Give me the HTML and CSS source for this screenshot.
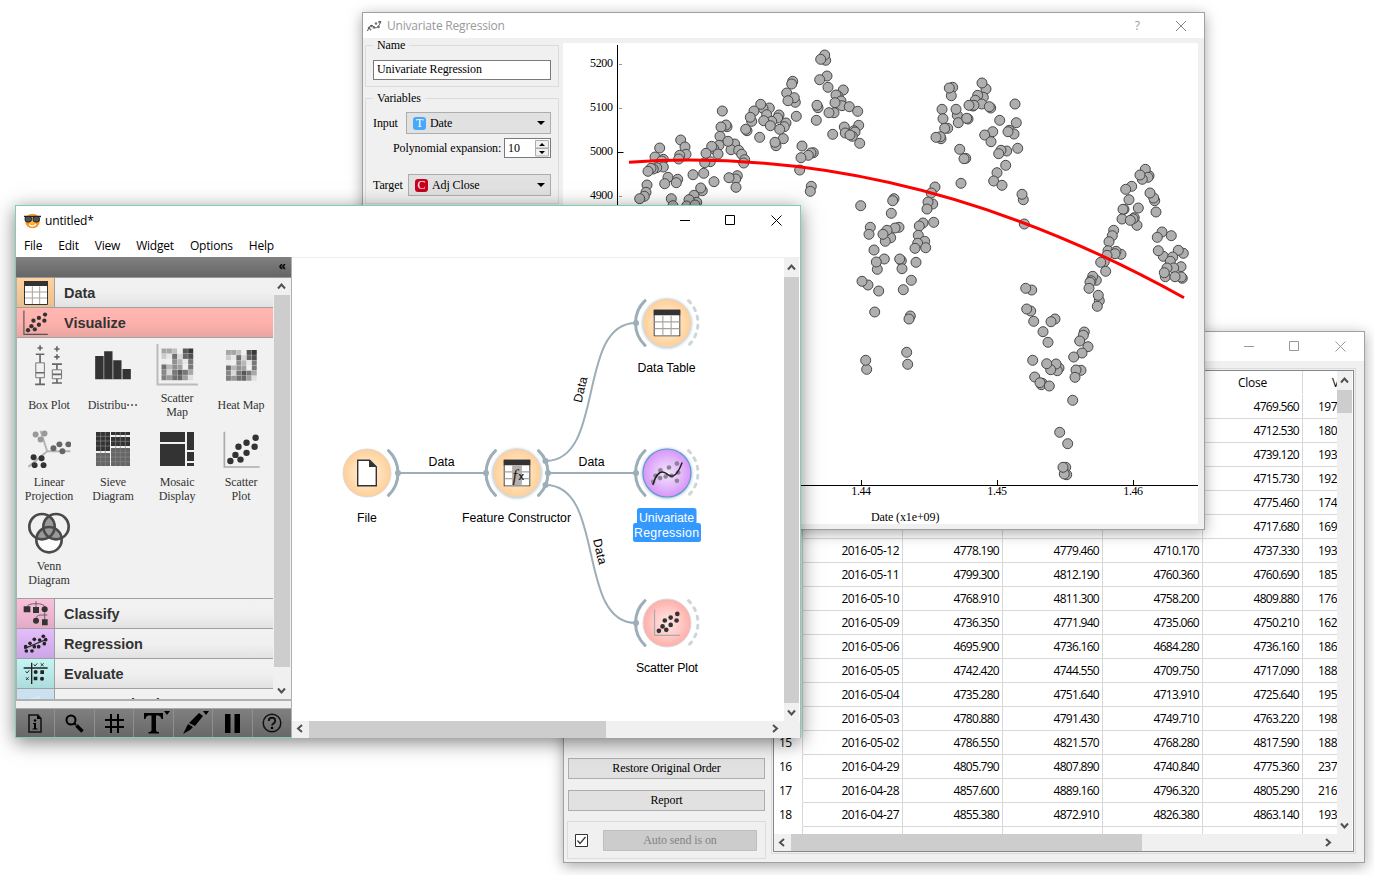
FILE: index.html
```html
<!DOCTYPE html>
<html lang="en">
<head>
<meta charset="utf-8">
<title>untitled*</title>
<link rel="stylesheet" href="styles.css">
</head>
<body>
<svg class="defs" width="0" height="0">
  <defs>
    <radialGradient id="gOrange"><stop offset="0" stop-color="#fff0dc"/><stop offset=".5" stop-color="#ffe2be"/><stop offset="1" stop-color="#ffcf97"/></radialGradient>
    <radialGradient id="gPurple"><stop offset="0" stop-color="#f3e2fd"/><stop offset=".5" stop-color="#e6c0fb"/><stop offset="1" stop-color="#d796f8"/></radialGradient>
    <radialGradient id="gPink"><stop offset="0" stop-color="#ffe6e4"/><stop offset=".5" stop-color="#ffcecb"/><stop offset="1" stop-color="#ffaea8"/></radialGradient>
    <filter id="soft" x="-30%" y="-30%" width="160%" height="160%"><feGaussianBlur stdDeviation="1.6"/></filter>
  </defs>
  <symbol id="i-table" viewBox="0 0 72 72"><path d="M1.5 1.5h69v69h-69z" fill="#fff" stroke="#333" stroke-width="3"/><path d="M0 0h72v15H0z" fill="#333"/><path d="M3 33h66M3 51h66M25 16v53M47 16v53" stroke="#aaa39c" stroke-width="3" fill="none"/></symbol>
  <symbol id="i-scatter" viewBox="638 106 110 110"><path d="M642 108v105h105" fill="none" stroke="var(--axis,#aaa)" stroke-width="5"/><g fill="#333"><circle cx="660" cy="195" r="9.5"/><circle cx="675" cy="177" r="9.5"/><circle cx="690" cy="191" r="9.5"/><circle cx="684" cy="153" r="9.5"/><circle cx="708" cy="171" r="9.5"/><circle cx="708" cy="141" r="9.5"/><circle cx="732" cy="153" r="9.5"/><circle cx="735" cy="126" r="9.5"/></g></symbol>
  <symbol id="i-curve" viewBox="960 540 100 78"><g fill="#8a8590"><circle cx="1040" cy="549" r="7"/><circle cx="1016" cy="561" r="7"/><circle cx="990" cy="569" r="7"/><circle cx="975" cy="586" r="7"/><circle cx="989" cy="593" r="7"/><circle cx="1006" cy="588" r="7"/><circle cx="1024" cy="586" r="7"/><circle cx="1044" cy="576" r="7"/><circle cx="968" cy="604" r="7"/><circle cx="1040" cy="601" r="7"/></g><path d="M967 614C975 585 988 572 1000 575C1010 577 1015 590 1028 587C1042 583 1050 562 1056 546" fill="none" stroke="#222" stroke-width="4.5"/></symbol>
</svg>

<section class="window table-window">
  <header class="titlebar">
    <svg class="sys" width="104" height="13" viewBox="0 0 104 13"><path d="M0 6.5h10M45.500 1.500h9v9h-9zM91.500 1.500l10 10M101.500 1.500l-10 10"/></svg>
  </header>
  <div class="table-body">
    <aside class="table-side">
      <div class="button">Restore Original Order</div>
      <div class="button">Report</div>
      <div class="autosend">
        <svg width="13" height="13" viewBox="0 0 13 13"><path d="M.5.5h12v12H.5z" fill="#fff" stroke="#333"/><path d="M2.500 6.500l2.500 3 5.500-6.500" fill="none" stroke="#333" stroke-width="1.200"/></svg>
        <div class="button disabled">Auto send is on</div>
      </div>
    </aside>
    <div class="table-frame">
      <div class="table-inner">
        <div class="grid" id="grid"></div>
        <div class="vbar"><svg width="15" height="19" viewBox="0 0 15 19"><path d="M4 11.500l3.500-4 3.500 4"/></svg><i class="thumb"></i><svg width="15" height="17" viewBox="0 0 15 17"><path d="M4 6.500l3.500 4 3.500-4"/></svg></div>
        <div class="hbar"><svg width="17" height="17" viewBox="0 0 17 17"><path d="M10 5l-4 3.500 4 3.500"/></svg><i class="thumb"></i><span class="fill"></span><svg width="17" height="17" viewBox="0 0 17 17"><path d="M6 5l4 3.500-4 3.500"/></svg></div>
      </div>
    </div>
  </div>
</section>

<section class="window plot-window">
  <header class="titlebar">
    <svg width="15" height="12" viewBox="0 0 15 12"><g fill="#777"><circle cx="2" cy="8" r="1.300"/><circle cx="4.500" cy="6" r="1.300"/><circle cx="7" cy="7.500" r="1.300"/><circle cx="9" cy="3.500" r="1.300"/><circle cx="12.500" cy="2" r="1.300"/><circle cx="11.500" cy="7" r="1.300"/><circle cx="3.500" cy="9.500" r="1"/></g><path d="M.5 11C3 4 5 5 7 7s5 0 7-6" fill="none" stroke="#555"/></svg>
    <span class="title">Univariate Regression</span>
    <span class="q">?</span>
    <svg class="sys" width="12" height="12" viewBox="0 0 12 12"><path d="M1 1l10 10M11 1L1 11"/></svg>
  </header>
  <div class="plot-body">
    <aside class="plot-side">
      <fieldset class="name"><legend>Name</legend><div class="input">Univariate Regression</div></fieldset>
      <fieldset class="vars"><legend>Variables</legend>
        <div class="row"><span>Input</span><div class="select date"><b>T</b><span>Date</span><i></i></div></div>
        <div class="row poly"><span>Polynomial expansion:</span><div class="spin"><span>10</span><svg width="15" height="17" viewBox="0 0 15 17"><path d="M.5.5h13v7.500H.5zM.5 8.500h13v7.500H.5z" fill="#f0f0f0" stroke="#acacac"/><path d="M4 6l3-3 3 3zM4 11l3 3 3-3z"/></svg></div></div>
        <div class="row target"><span>Target</span><div class="select adj"><b>C</b><span>Adj Close</span><i></i></div></div>
      </fieldset>
    </aside>
    <svg class="plot" width="635" height="481" viewBox="563 43 635 481">
      <path class="axis" d="M617.500 45v440.500H1198M617.500 152.500h6M861.500 480v5M997.500 480v5M1133.500 480v5"/>
      <path class="minor" d="M619 64.500h3M619 108.500h3M619 196.500h3"/>
      <g class="serif" text-anchor="end"><text x="612.500" y="67">5200</text><text x="612.500" y="111">5100</text><text x="612.500" y="155">5000</text><text x="612.500" y="199">4900</text></g>
      <g class="serif" text-anchor="middle"><text x="861" y="495">1.44</text><text x="997" y="495">1.45</text><text x="1133" y="495">1.46</text><text x="905" y="521" textLength="68">Date (x1e+09)</text></g>
      <g id="points" class="points"></g>
      <path class="fit" d="M629 162.200Q906.500 143.200 1184 297.700"/>
    </svg>
  </div>
</section>

<section class="window main-window">
  <header class="titlebar">
    <svg width="17" height="16" viewBox="0 0 17 16"><circle cx="8.500" cy="8" r="7.300" fill="#f7941e"/><circle cx="8" cy="6.500" r="5" fill="#ffb43a"/><path d="M5 11.500c2 2 5 2 7-.5" stroke="#fff" stroke-width="1.500" fill="none"/><path d="M0 3.500h17" stroke="#222" stroke-width="1.500"/><rect x="1" y="3.500" width="6.500" height="5.500" rx="2.500" fill="#4a5459" stroke="#222"/><rect x="9" y="3.500" width="6.500" height="5.500" rx="2.500" fill="#4a5459" stroke="#222"/></svg>
    <span class="title">untitled*</span>
    <svg class="sys" width="104" height="13" viewBox="0 0 104 13"><path d="M1 6.500h10M46.500 1.500h9v9h-9zM92.500 1.500l10 10M102.500 1.500l-10 10"/></svg>
  </header>
  <nav class="menu"><span>File</span><span>Edit</span><span>View</span><span>Widget</span><span>Options</span><span>Help</span></nav>
  <div class="workspace">
    <aside class="dock">
      <div class="dock-head">«</div>
      <div class="toolbox">
        <div class="cats">
          <div class="cat data"><div class="ic"><svg width="24" height="24"><use href="#i-table"/></svg></div><span>Data</span></div>
          <div class="cat active"><div class="ic dark-axis"><svg width="25" height="25"><use href="#i-scatter"/></svg></div><span>Visualize</span></div>
          <div class="widgets">
            <div class="w"><div class="pic"><svg width="30" height="43" viewBox="74 430 90 130"><g fill="none" stroke="#666" stroke-width="5"><path d="M92 434v16M84 442h16M143 437v16M135 445h16M143 461v16M135 469h16M79 461h26M92 461v26M92 532v20M77 552h30M128 491h30M143 491v17M143 535v14M128 548h30M79 517h26M129 522h28"/><path d="M79 487h26v45H79zM129 508h28v27h-28z" stroke="#777" stroke-width="3"/></g></svg></div><p>Box Plot</p></div>
            <div class="w"><div class="pic"><svg width="36" height="29" viewBox="256 452 107 87"><path d="M256 467h24v70h-24zM283 453h25v84h-25zM310 480h25v57h-25zM338 506h25v31h-25z" fill="#333"/><path d="M281 467v70M309 480v57M336 506v31" stroke="#777" stroke-width="3"/></svg></div><p>Distribu⋯</p></div>
            <div class="w"><div class="pic"><svg width="42" height="42" viewBox="0 0 42 42"><path d="M1.500 0v40.500H42" fill="none" stroke="#bbb" stroke-width="2"/><g class="heat" transform="translate(5.500 4.500) scale(5.333)"></g></svg></div><p>Scatter<br>Map</p></div>
            <div class="w"><div class="pic"><svg width="31" height="31" viewBox="0 0 6 6"><g class="heat"></g></svg></div><p>Heat Map</p></div>
            <div class="w"><div class="pic"><svg width="43" height="38" viewBox="52 104 130 114"><path d="M90 106l20 62h70M110 168l-57 47" stroke="#b4b4b4" stroke-width="6" fill="none"/><g fill="#999"><circle cx="75" cy="117" r="9"/><circle cx="102" cy="114" r="9"/><circle cx="90" cy="132" r="9"/></g><g fill="#666"><circle cx="129" cy="159" r="9"/><circle cx="147" cy="147" r="9"/><circle cx="174" cy="147" r="9"/><circle cx="156" cy="168" r="9"/></g><g fill="#333"><circle cx="69" cy="186" r="9"/><circle cx="93" cy="189" r="9"/><circle cx="72" cy="210" r="9"/><circle cx="99" cy="210" r="9"/></g></svg></div><p>Linear<br>Projection</p></div>
            <div class="w"><div class="pic"><svg width="34" height="34" viewBox="258 111 102 102"><path d="M258 111h42v57h-42zM303 111h57v9h-57zM303 126h57v27h-57z" fill="#333"/><path d="M258 174h42v39h-42zM303 159h57v54h-57z" fill="#666"/><path d="M258 124h42M258 138h42M258 153h42M258 186h42M258 200h42M303 139h57M303 172h57M303 186h57M303 200h57M272 111v102M286 111v102M317 111v102M331 111v102M346 111v102" stroke="#888" stroke-width="2"/></svg></div><p>Sieve<br>Diagram</p></div>
            <div class="w"><div class="pic"><svg width="34" height="34" viewBox="450 111 102 102"><path d="M450 111h75v30h-75zM450 147h75v66h-75zM531 111h21v54h-21zM531 171h21v27h-21zM531 204h21v9h-21z" fill="#333"/></svg></div><p>Mosaic<br>Display</p></div>
            <div class="w"><div class="pic"><svg width="37" height="37"><use href="#i-scatter"/></svg></div><p>Scatter<br>Plot</p></div>
            <div class="w"><div class="pic"><svg width="42" height="42" viewBox="54 353 126 126"><path d="M117 363l18 37 18 33-30 2-6-4-40 2 22-36z" fill="#999"/><path d="M80 440q5 32 37 32t37-32l-20-5-17-7-17 7z" fill="#fff" fill-opacity=".8"/><g fill="none" stroke="#4a4a4a" stroke-width="8"><circle cx="96" cy="397" r="38"/><circle cx="138" cy="397" r="38"/><circle cx="117" cy="436" r="38"/></g></svg></div><p>Venn<br>Diagram</p></div>
          </div>
          <div class="cat classify"><div class="ic"><svg width="26" height="25" viewBox="40 32 78 75"><path d="M79 32v20M52 50q2-10 27-10t26 10v10M79 88q0-14 14-14h20M105 66v24" fill="none" stroke="#666" stroke-width="3"/><g fill="#333"><path d="M42 48h20v18H42zM70 50h18v18H70zM97 87h17v18H97z"/><circle cx="105" cy="57" r="9"/><circle cx="79" cy="91" r="9"/></g></svg></div><span>Classify</span></div>
          <div class="cat regress"><div class="ic"><svg width="25" height="20" viewBox="40 130 75 60"><path d="M44 174l66-28" stroke="#333" stroke-width="4"/><g fill="#222"><circle cx="48" cy="168" r="5.500"/><circle cx="50" cy="181" r="5.500"/><circle cx="61" cy="158" r="5.500"/><circle cx="67" cy="181" r="5.500"/><circle cx="74" cy="146" r="5.500"/><circle cx="74" cy="168" r="5.500"/><circle cx="87" cy="168" r="5.500"/><circle cx="90" cy="148" r="5.500"/><circle cx="101" cy="137" r="5.500"/><circle cx="108" cy="147" r="5.500"/><circle cx="104" cy="159" r="5.500"/></g></svg></div><span>Regression</span></div>
          <div class="cat evaluate"><div class="ic"><svg width="25" height="23" viewBox="40 215 75 69"><path d="M66 217v64M42 233h72" stroke="#222" stroke-width="4"/><path d="M72 222l4 5 7-8M48 243l4 5 7-8M93 219l9 8M102 219l-9 8M49 261l8 8M57 261l-8 8" stroke="#333" stroke-width="3" fill="none"/><path d="M92 240h11v11H92zM72 259h11v11H72z" fill="#222"/><circle cx="78" cy="245" r="6" fill="#222"/><circle cx="97" cy="265" r="6" fill="#222"/></svg></div><span>Evaluate</span></div>
          <div class="cat unsup"><div class="ic"><svg width="22" height="18" viewBox="0 0 22 18"><g fill="#dce6ec"><circle cx="8" cy="5" r="3"/><circle cx="13" cy="3" r="2.500"/><circle cx="17" cy="8" r="3"/><circle cx="5" cy="10" r="3"/></g></svg></div><span>Unsupervised</span></div>
        </div>
        <div class="vbar"><svg width="15" height="17" viewBox="0 0 15 17"><path d="M4 10.500l3.500-4 3.500 4"/></svg><i class="thumb"></i><span class="fill"></span><svg width="15" height="17" viewBox="0 0 15 17"><path d="M4 6.500l3.500 4 3.500-4"/></svg></div>
      </div>
      <div class="tools">
        <div><svg width="14" height="19" viewBox="0 0 14 19"><path d="M1 1h9l3 3.500V18H1z" fill="none" stroke="#111" stroke-width="1.500"/><path d="M9 1v4h4z"/><circle cx="7" cy="6.500" r="1.300"/><path d="M5 9h3v5.500h1.500v1h-5v-1H6V10H5z"/></svg></div>
        <div><svg width="19" height="19" viewBox="0 0 19 19"><circle cx="6" cy="6" r="4.500" fill="none" stroke="#000" stroke-width="2"/><path d="M9 9l2 2" stroke="#000" stroke-width="2"/><path d="M11.500 11.500l6 6" stroke="#000" stroke-width="3.500"/></svg></div>
        <div><svg width="19" height="19" viewBox="0 0 19 19"><path d="M6 0v19M13 0v19M0 6h19M0 13h19" stroke="#000" stroke-width="2"/></svg></div>
        <div class="menu-tool"><svg width="19" height="21" viewBox="0 0 19 21"><path d="M0 0h19v6h-1.500q-.5-3-3-3.500H12V17q0 2 3 2v1.500H4.500V19q3 0 3-2V2.500H5Q2 2.800 1.500 6H0z"/></svg><i></i></div>
        <div class="menu-tool"><svg width="20" height="21" viewBox="0 0 20 21"><path d="M16 0l4 3-8 10-6-3zM5 11l5 3-3 3-7 4z"/></svg><i></i></div>
        <div><svg width="15" height="19" viewBox="0 0 15 19"><path d="M0 0h5.500v19H0zM9.500 0H15v19H9.500z"/></svg></div>
        <div><svg width="20" height="20" viewBox="0 0 20 20"><circle cx="10" cy="10" r="8.800" fill="none" stroke="#111" stroke-width="1.500"/><path d="M6.800 8q0-3.200 3.200-3.200t3.200 3q0 1.800-1.800 2.800-1.300.8-1.300 2" fill="none" stroke="#111" stroke-width="1.900"/><circle cx="10" cy="15" r="1.300"/></svg></div>
      </div>
    </aside>
    <div class="canvas-area">
      <svg class="canvas" width="492" height="463" viewBox="292 257 492 463">
        <g class="link"><path d="M398 472h88M548 472h88M545.500 460C606 460 576 322 636 322M545.500 484C606 484 576 622 636 622"/></g>
        <g class="arc"><path d="M388.500 449.700A31 31 0 0 1 388.500 494.300M495.500 449.700A31 31 0 0 0 495.500 494.300M538.500 449.700A31 31 0 0 1 538.500 494.300M645 299.700A31 31 0 0 0 645 344.300M645 449.700A31 31 0 0 0 645 494.300M645 599.700A31 31 0 0 0 645 644.300"/></g>
        <g class="arc dashed"><path d="M688.500 299.700A31 31 0 0 1 688.500 344.300M688.500 449.700A31 31 0 0 1 688.500 494.300M688.500 599.700A31 31 0 0 1 688.500 644.300"/></g>
        <g fill="#9caeb8"><circle cx="398" cy="472" r="3"/><circle cx="486" cy="472" r="3"/><circle cx="548" cy="472" r="3"/><circle cx="545.500" cy="460" r="3"/><circle cx="545.500" cy="484" r="3"/><circle cx="636" cy="322" r="3"/><circle cx="636" cy="472" r="3"/><circle cx="636" cy="622" r="3"/></g>
        <g fill="#a9bccb" filter="url(#soft)"><circle cx="517" cy="472.500" r="24.500"/><circle cx="667" cy="322.500" r="24.500"/><circle cx="667" cy="472.500" r="25"/></g>
        <g class="nodes"><circle cx="367" cy="472" r="24" fill="url(#gOrange)"/><circle cx="517" cy="472" r="24" fill="url(#gOrange)"/><circle cx="667" cy="322" r="24" fill="url(#gOrange)"/><circle cx="667" cy="622" r="24" fill="url(#gPink)"/><circle class="sel" cx="667" cy="472" r="24" fill="url(#gPurple)"/></g>
        <path d="M357.700 459.200h12l6.600 6.500v19h-18.600z" fill="#fff" stroke="#333" stroke-width="1.400"/><path d="M369 459v7h7.500z" fill="#333"/>
        <use href="#i-table" x="503.500" y="458.500" width="27" height="27"/><path d="M512.500 464h9v20h-9z" fill="#b5b0ab"/><text class="fx" x="512.500" y="480">f</text><text class="fx2" x="518.500" y="479">x</text>
        <use href="#i-table" x="653.500" y="308.500" width="27" height="27"/>
        <use href="#i-curve" x="650.500" y="459.500" width="33" height="26"/>
        <use href="#i-scatter" x="653.500" y="608" width="27" height="27"/>
        <path d="M639.500 507h54.500a2.500 2.500 0 0 1 2.500 2.500V522h2a2.500 2.500 0 0 1 2.500 2.500v14a2.500 2.500 0 0 1-2.500 2.500h-63a2.500 2.500 0 0 1-2.500-2.500v-14a2.500 2.500 0 0 1 2.500-2.500h1.500v-12.500a2.500 2.500 0 0 1 2.500-2.500z" fill="#3399ff"/>
        <g class="labels" text-anchor="middle">
          <text x="367" y="521">File</text><text x="516.500" y="521" textLength="109">Feature Constructor</text><text x="666.500" y="371" textLength="58">Data Table</text><text x="667" y="671" textLength="62">Scatter Plot</text>
          <text x="441.500" y="465">Data</text><text x="591.500" y="465">Data</text>
          <text transform="translate(584.500 389.500) rotate(-77)">Data</text><text transform="translate(596 551.500) rotate(77)">Data</text>
          <text class="on" x="666.500" y="521" textLength="55">Univariate</text><text class="on" x="666.500" y="536" textLength="65">Regression</text>
        </g>
      </svg>
      <div class="vbar"><svg width="15" height="19" viewBox="0 0 15 19"><path d="M4 11.500l3.500-4 3.500 4"/></svg><i class="thumb"></i><svg width="15" height="18" viewBox="0 0 15 18"><path d="M4 7.500l3.500 4 3.500-4"/></svg></div>
      <div class="hbar"><svg width="17" height="16" viewBox="0 0 17 16"><path d="M10 4l-4 3.500 4 3.500"/></svg><i class="thumb"></i><span class="fill"></span><svg width="17" height="16" viewBox="0 0 17 16"><path d="M6 4l4 3.500-4 3.500"/></svg></div>
    </div>
  </div>
</section>
<script src="app.js"></script>
</body>
</html>
```
FILE: styles.css
```css
* { box-sizing: border-box; }
body { margin: 0; width: 1374px; height: 875px; position: relative; overflow: hidden; background: #fff; font: 12px "Open Sans", "Noto Sans", sans-serif; color: #000; }
.defs { position: absolute; }
svg { display: block; flex: none; }
i { display: block; font-style: normal; }
.window { position: absolute; display: flex; flex-direction: column; background: #f0f0f0; border: 1px solid #a0a0a0; box-shadow: 0 3px 13px rgba(0,0,0,.35); }
.table-window { left: 563px; top: 331px; width: 802px; height: 532px; }
.plot-window { left: 362px; top: 12px; width: 843px; height: 518px; }
.main-window { left: 15px; top: 205px; width: 786px; height: 533px; border-color: #7fd0b0; background: #fff; box-shadow: 0 4px 18px rgba(0,0,0,.5); }
.titlebar { display: flex; align-items: center; background: #fff; flex: none; }
.sys { margin-left: auto; fill: none; stroke: #999; }
.main-window .sys { stroke: #000; }
.vbar, .hbar { display: flex; background: #f0f0f0; fill: none; stroke: #505050; stroke-width: 2; }
.vbar { flex-direction: column; width: 15px; }
.thumb { background: #cdcdcd; flex: none; }
.fill { flex: 1; }

/* data table window */
.table-window .titlebar { height: 29px; padding-right: 16px; }
.table-body { flex: 1; display: flex; min-height: 0; }
.table-side { width: 207px; display: flex; flex-direction: column; justify-content: flex-end; padding: 0 5px 3px 3px; }
.button { height: 21px; line-height: 18px; margin: 0 1px 11px; text-align: center; background: #e1e1e1; border: 1px solid #adadad; font: 12px/18px "Liberation Serif", serif; letter-spacing: -.1px; }
.button.disabled { flex: 1; margin: 0; background: #ccc; border-color: #bfbfbf; color: #838383; }
.autosend { height: 38px; margin-top: -1px; border: 1px solid #dcdcdc; display: flex; align-items: center; gap: 15px; padding: 0 8px 0 7px; }
.table-frame { margin: 7px 0 8px; width: 585px; border: 1px solid #dcdcdc; padding: 1px; }
.table-inner { height: 100%; border: 1px solid #828790; display: grid; grid-template: 463px 17px / 563px 15px; background: #fff; }
.table-inner .hbar { grid-column: 1 / 3; }
.table-inner .vbar .thumb { height: 23px; margin-bottom: auto; }
.table-inner .hbar .thumb { width: 351px; }
.table-inner .hbar { padding-right: 15px; }
.grid { overflow: hidden; display: grid; grid-template-columns: 29px repeat(5, 100px) 100px; grid-auto-rows: 24px; letter-spacing: -.72px; align-content: start; }
.grid > div { border-right: 1px solid #d8d8d8; border-bottom: 1px solid #d8d8d8; text-align: right; padding-right: 3px; line-height: 23px; white-space: nowrap; }
.grid > .head { text-align: center; height: 23px; border-bottom: 0; letter-spacing: -.3px; padding: 0; }
.grid > .num { text-align: left; padding-left: 5px; letter-spacing: -.5px; border-bottom-color: #fff; }
.grid > .date { letter-spacing: -.5px; }
.grid > .vol { text-align: left; padding-left: 15px; letter-spacing: -.5px; }
.grid > .head.vhead { text-align: left; padding-left: 29px; }

/* regression window */
.plot-window .titlebar { height: 25px; padding: 0 17px 0 4px; color: #999; }
.plot-window .title { margin-left: 5px; letter-spacing: -.2px; }
.q { margin-left: auto; margin-right: 35px; }
.plot-window .sys { margin-left: 0; stroke: #888; }
.plot-body { display: flex; padding: 5px 6px 6px 2px; font: 12px "Liberation Serif", serif; letter-spacing: -.1px; }
.plot-side { width: 194px; margin-right: 4px; }
fieldset { margin: 0; padding: 0; border: 1px solid #dcdcdc; min-width: 0; }
legend { margin-left: 7px; padding: 0 4px; line-height: 12px; }
.name { height: 48px; margin-top: -4px; }
.vars { margin-top: 5px; height: 112px; padding: 0 7px; }
.vars legend { margin-left: 0; }
.input { margin: 9px 7px 0; height: 20px; line-height: 17px; background: #fff; border: 1px solid #7a7a7a; padding-left: 3px; }
.row { display: flex; align-items: center; justify-content: space-between; margin-top: 8px; }
.row.poly { margin-top: 4px; padding-left: 20px; }
.row.target { margin-top: 16px; }
.select { height: 22px; background: #e1e1e1; border: 1px solid #adadad; display: flex; align-items: center; padding: 0 5px 0 6px; }
.select b { width: 13px; height: 13px; border-radius: 3px; color: #fff; background: #46a8fb; margin-right: 4px; text-align: center; font-weight: 400; line-height: 13px; }
.select.adj b { background: #c8001e; }
.select i { margin-left: auto; border: 4px solid transparent; border-top-color: #000; border-bottom: 0; }
.date.select { width: 145px; }
.adj { width: 143px; }
.spin { width: 47px; height: 20px; background: #fff; border: 1px solid #7a7a7a; display: flex; align-items: center; justify-content: space-between; padding-left: 3px; }
.plot { background: #fff; }
.axis { fill: none; stroke: #000; }
.minor { fill: none; stroke: #999; }
.serif { font: 12px "Liberation Serif", serif; letter-spacing: -.4px; }
.points circle { fill: #afafaf; stroke: #484848; stroke-width: 1; }
.fit { fill: none; stroke: #f00; stroke-width: 3; }

/* main window */
.main-window .titlebar { height: 29px; padding: 0 17px 0 8px; }
.main-window .title { margin-left: 4px; letter-spacing: -.15px; }
.menu { height: 22px; display: flex; gap: 16px; padding-left: 8px; line-height: 21px; letter-spacing: -.2px; }
.workspace { display: flex; height: 480px; }
.dock { width: 276px; display: flex; flex-direction: column; border-right: 1px solid #b0b0b0; background: #f0f0f0; }
.dock-head { height: 21px; background: linear-gradient(#808080, #666); border-bottom: 1px solid #999; text-align: right; padding-right: 5px; line-height: 18px; font-weight: 700; }
.toolbox { height: 423px; display: flex; border-left: 1px solid #b0b0b0; border-bottom: 2px solid #b0b0b0; overflow: hidden; }
.cats { width: 256px; overflow: hidden; background: #f1f1f1; margin-right: 1px; }
.cat { height: 30px; display: flex; align-items: center; border-bottom: 1px solid #a0a0a0; background: linear-gradient(#f2f2f2, #f0f0f0 50%, #e2e2e2); font: bold 14.5px "Liberation Sans", sans-serif; color: #333; }
.cat .ic { width: 38px; height: 29px; display: flex; align-items: center; justify-content: center; border-right: 1px solid #a0a0a0; margin-right: 9px; }
.cat.active { background: linear-gradient(#ffb7b2, #ffb1ac 50%, #e9a5a1); }
.cat.active .ic { border-color: transparent; }
.dark-axis { --axis: #555; }
.data .ic { background: linear-gradient(#ffd39f, #e8bf8e); }
.classify .ic { background: linear-gradient(#fbc1dc, #e2abc5); }
.regress .ic { background: linear-gradient(#e3bdfc, #cca5e5); }
.evaluate .ic { background: linear-gradient(#c4f5f5, #acdcdc); }
.unsup .ic { background: #c9e1f0; }
.widgets { height: 261px; border-bottom: 1px solid #a0a0a0; display: grid; grid-template-columns: repeat(4, 64px); grid-auto-rows: 84px; align-content: start; padding-top: 6px; }
.w { display: flex; flex-direction: column; align-items: center; }
.pic { height: 42px; display: flex; align-items: center; justify-content: center; }
.w p { margin: 5px 0 0; height: 28px; display: flex; align-items: center; text-align: center; font: 12px/14px "Liberation Serif", serif; color: #333; letter-spacing: -.1px; }
.toolbox .vbar { width: 16px; }
.toolbox .vbar .thumb { height: 372px; }
.tools { margin-top: 7px; height: 29px; display: flex; background: linear-gradient(#808080, #686868); border-top: 1px solid #aaa; }
.tools div { flex: 1; display: flex; align-items: center; justify-content: center; border-right: 1px solid #8f8f8f; position: relative; }
.tools div:last-child { border: 0; }
.tools i { position: absolute; right: 3px; top: 2px; border: 3px solid transparent; border-top: 4px solid #000; border-bottom: 0; }
.canvas-area { display: grid; grid-template: 463px 17px / 492px 16px; border-top: 1px solid #eee; height: 480px; }
.canvas-area .hbar { grid-column: 1 / 3; padding-right: 16px; }
.canvas-area .vbar .thumb { height: 426px; }
.canvas-area .hbar .thumb { width: 297px; }
.link path { fill: none; stroke: #9caeb8; stroke-width: 2; }
.arc path { fill: none; stroke: #9caeb8; stroke-width: 3; stroke-linecap: round; }
.arc.dashed path { stroke: #ccd6db; stroke-dasharray: 3 6; }
.nodes circle { stroke: #d9dadb; stroke-width: 1; }
.nodes .sel { stroke: #5d9ad6; stroke-width: 1.2; }
.labels { font: 12.3px "Liberation Sans", sans-serif; }
.on { fill: #fff; }
.fx { font: italic 17px "Liberation Serif", serif; fill: #222; }
.fx2 { font: bold 10px "Liberation Sans", sans-serif; fill: #222; }
```
FILE: app.js
```js
const SVG = "http://www.w3.org/2000/svg";

// Sample clusters: plot offset followed by x,y pairs in thirds of a pixel.
const clusters = [
  [610, 35, "647,76 644,60 632,73 651,123 629,134 654,157 700,165 684,183 678,180 693,198 696,212 675,203 718,215 743,229 624,218 621,211 672,233 657,233 619,256 746,271 732,287 735,291 703,276 706,294 727,304 720,300 668,298 749,325 548,139 545,147 530,174 556,202 553,188 534,197 559,244 478,219 459,220 452,208 432,228 425,259 421,247 470,239 507,240 503,249 485,259 461,257 481,272 528,264 523,275 509,283 411,287 407,283 449,307 520,311 498,332 495,322 337,228 351,275 348,270 333,276 330,304 374,327 363,344 354,319 327,331 311,341 305,334 324,357 301,380 284,383 288,355 386,346 395,358 404,374 401,384 212,315 225,336 228,358 209,361 206,372 149,339 135,366 160,373 155,378 160,396 140,398 130,402 123,400 114,409 111,450 108,472 103,484 89,491 174,427 164,446 203,433 199,443 249,419 281,415 312,440 382,422 377,432 357,428 378,457 277,467 272,459 184,491 189,512 252,481 260,502 237,494 230,513 255,510 576,333 610,353 603,354 595,361 573,368 569,405 604,454 601,469"],
  [790, 35, "488,157 484,182 478,159 588,162 576,144 580,187 563,181 556,196 575,207 549,213 552,211 537,211 602,219 598,215 675,207 456,223 502,241 498,223 459,251 505,263 534,252 530,250 473,280 464,280 453,311 451,305 438,307 629,256 679,263 608,290 584,300 603,320 658,286 672,297 654,290 683,340 650,348 633,346 626,356 509,343 527,370 522,371 513,445 647,391 621,413 611,438 636,451 700,494 696,478 703,567 435,456 424,474"],
  [840, 170, "62,107 162,86 158,92 154,130 278,102 264,96 261,117 91,172 87,193 177,172 165,174 152,203 141,181 136,214 129,193 102,240 281,157 249,159 238,168 235,196 254,214 233,220 257,233 225,235 133,267 112,298 109,276 184,272 186,296 179,267 228,277 84,345 66,334 116,363 190,359 214,331 104,426 211,438 207,447 200,547 203,583 80,598 77,571 575,360 557,355 572,423 560,417 581,454"],
  [1000, 150, "447,77 436,58 444,82 427,88 420,75 395,109 377,118 387,149 464,152 461,144 450,129 468,186 415,174 372,178 369,178 366,207 411,226 403,203 399,206 391,211 341,241 337,257 327,275 324,302 363,313 348,304 345,311 321,316 313,335 302,337 317,364 289,391 278,379 273,392 270,397 267,415 298,452 295,436 292,469 486,246 472,262 514,257 490,319 475,302 550,310 535,301 518,321 511,334 543,350 521,354 501,354 496,380 493,368 547,385 544,381 525,380 165,507 153,515 129,545 144,577 253,546 250,556 239,573 264,590"],
  [1000, 320, "246,99 221,111 98,121 177,144 172,152 168,132 152,149 140,131 104,171 127,190 124,194 120,188 148,198 243,151 228,150 225,172 218,241 179,337 203,371 197,442 200,464 193,462 189,442"]
];

const points = document.getElementById("points");
for (const [ox, oy, list] of clusters) {
  for (const pair of list.split(" ")) {
    const [x, y] = pair.split(",").map(Number);
    const c = document.createElementNS(SVG, "circle");
    c.setAttribute("cx", (ox + x / 3).toFixed(1));
    c.setAttribute("cy", (oy + y / 3).toFixed(1));
    c.setAttribute("r", 5);
    points.append(c);
  }
}

const shades = ["a6a6c0f05838", "cce870d86850", "ecf090b8e878", "70b890a0f078", "88d8785878a8", "80987068a0e0"];
for (const g of document.querySelectorAll(".heat")) {
  shades.forEach((row, y) => row.match(/../g).forEach((h, x) => {
    const r = document.createElementNS(SVG, "rect");
    r.setAttribute("x", x);
    r.setAttribute("y", y);
    r.setAttribute("width", 0.95);
    r.setAttribute("height", 0.95);
    r.setAttribute("fill", "#" + h + h + h);
    g.append(r);
  }));
}

const rows = [
  ["", "", "", "", "4769.560", "197"],
  ["", "", "", "", "4712.530", "180"],
  ["", "", "", "", "4739.120", "193"],
  ["", "", "", "", "4715.730", "192"],
  ["", "", "", "", "4775.460", "174"],
  ["", "", "", "", "4717.680", "169"],
  ["2016-05-12", "4778.190", "4779.460", "4710.170", "4737.330", "193"],
  ["2016-05-11", "4799.300", "4812.190", "4760.360", "4760.690", "185"],
  ["2016-05-10", "4768.910", "4811.300", "4758.200", "4809.880", "176"],
  ["2016-05-09", "4736.350", "4771.940", "4735.060", "4750.210", "162"],
  ["2016-05-06", "4695.900", "4736.160", "4684.280", "4736.160", "186"],
  ["2016-05-05", "4742.420", "4744.550", "4709.750", "4717.090", "188"],
  ["2016-05-04", "4735.280", "4751.640", "4713.910", "4725.640", "195"],
  ["2016-05-03", "4780.880", "4791.430", "4749.710", "4763.220", "198"],
  ["2016-05-02", "4786.550", "4821.570", "4768.280", "4817.590", "188"],
  ["2016-04-29", "4805.790", "4807.890", "4740.840", "4775.360", "237"],
  ["2016-04-28", "4857.600", "4889.160", "4796.320", "4805.290", "216"],
  ["2016-04-27", "4855.380", "4872.910", "4826.380", "4863.140", "193"],
  ["2016-04-26", "4888.910", "4915.880", "4875.480", "4888.280", "199"]
];
const grid = document.getElementById("grid");
const cell = (text, cls) => {
  const d = document.createElement("div");
  d.className = cls;
  d.textContent = text;
  grid.append(d);
};
["", "", "", "", "", "Close", "Volume"].forEach((t, i) => cell(t, i === 6 ? "head vhead" : "head"));
rows.forEach((r, n) => {
  cell(n + 1, "num");
  r.forEach((v, i) => cell(v, ["date", "", "", "", "", "vol"][i]));
});
```
